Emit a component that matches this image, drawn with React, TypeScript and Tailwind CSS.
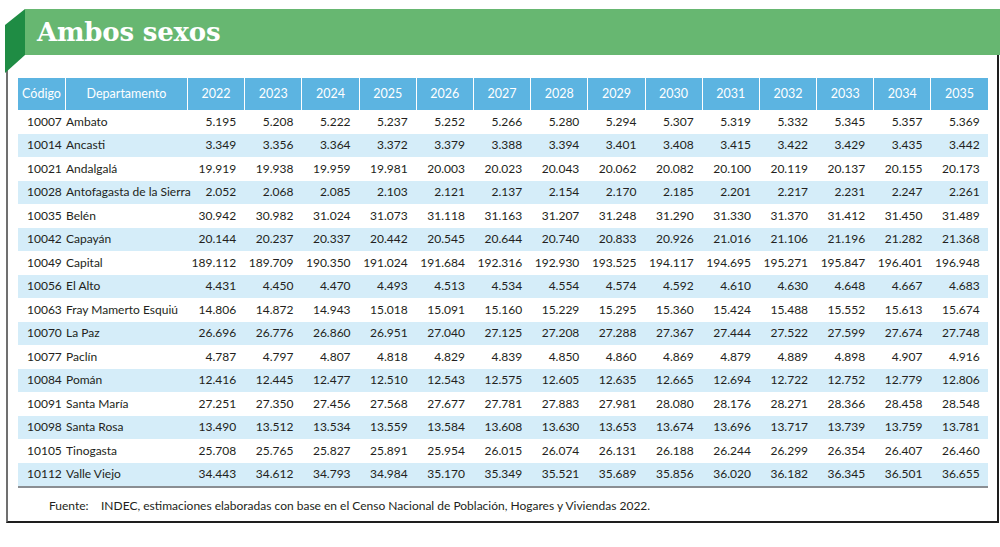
import React from "react";

const years = [2022, 2023, 2024, 2025, 2026, 2027, 2028, 2029, 2030, 2031, 2032, 2033, 2034, 2035];

const rows: [string, string, string][] = [
  ["10007", "Ambato", "5.195 5.208 5.222 5.237 5.252 5.266 5.280 5.294 5.307 5.319 5.332 5.345 5.357 5.369"],
  ["10014", "Ancasti", "3.349 3.356 3.364 3.372 3.379 3.388 3.394 3.401 3.408 3.415 3.422 3.429 3.435 3.442"],
  ["10021", "Andalgalá", "19.919 19.938 19.959 19.981 20.003 20.023 20.043 20.062 20.082 20.100 20.119 20.137 20.155 20.173"],
  ["10028", "Antofagasta de la Sierra", "2.052 2.068 2.085 2.103 2.121 2.137 2.154 2.170 2.185 2.201 2.217 2.231 2.247 2.261"],
  ["10035", "Belén", "30.942 30.982 31.024 31.073 31.118 31.163 31.207 31.248 31.290 31.330 31.370 31.412 31.450 31.489"],
  ["10042", "Capayán", "20.144 20.237 20.337 20.442 20.545 20.644 20.740 20.833 20.926 21.016 21.106 21.196 21.282 21.368"],
  ["10049", "Capital", "189.112 189.709 190.350 191.024 191.684 192.316 192.930 193.525 194.117 194.695 195.271 195.847 196.401 196.948"],
  ["10056", "El Alto", "4.431 4.450 4.470 4.493 4.513 4.534 4.554 4.574 4.592 4.610 4.630 4.648 4.667 4.683"],
  ["10063", "Fray Mamerto Esquiú", "14.806 14.872 14.943 15.018 15.091 15.160 15.229 15.295 15.360 15.424 15.488 15.552 15.613 15.674"],
  ["10070", "La Paz", "26.696 26.776 26.860 26.951 27.040 27.125 27.208 27.288 27.367 27.444 27.522 27.599 27.674 27.748"],
  ["10077", "Paclín", "4.787 4.797 4.807 4.818 4.829 4.839 4.850 4.860 4.869 4.879 4.889 4.898 4.907 4.916"],
  ["10084", "Pomán", "12.416 12.445 12.477 12.510 12.543 12.575 12.605 12.635 12.665 12.694 12.722 12.752 12.779 12.806"],
  ["10091", "Santa María", "27.251 27.350 27.456 27.568 27.677 27.781 27.883 27.981 28.080 28.176 28.271 28.366 28.458 28.548"],
  ["10098", "Santa Rosa", "13.490 13.512 13.534 13.559 13.584 13.608 13.630 13.653 13.674 13.696 13.717 13.739 13.759 13.781"],
  ["10105", "Tinogasta", "25.708 25.765 25.827 25.891 25.954 26.015 26.074 26.131 26.188 26.244 26.299 26.354 26.407 26.460"],
  ["10112", "Valle Viejo", "34.443 34.612 34.793 34.984 35.170 35.349 35.521 35.689 35.856 36.020 36.182 36.345 36.501 36.655"],
];

const grid = "grid grid-cols-[47px_122px_repeat(14,57.2px)]";

export default function App() {
  return (
    <div
      className="relative w-[1000px] h-[547px] bg-white overflow-hidden text-[#231f20]"
      style={{ fontFamily: "Lato, 'Open Sans', sans-serif" }}
    >
      <div className="ml-[25px] mt-[9px] h-[46px] bg-[#67b771] flex items-center pl-[12px]">
        <span
          className="text-white font-bold text-[26px] leading-none tracking-[-0.2px]"
          style={{ fontFamily: "'DejaVu Serif', serif" }}
        >
          Ambos sexos
        </span>
      </div>

      <div className="ml-[6px] w-[993px] h-[468px] border-l-2 border-l-[#707070] border-r-2 border-r-[#1e1e1e] border-b-2 border-b-[#1e1e1e] pt-[23px] pl-[10px]">
        <div className="w-[970px] text-[12px]">
          <div className={`${grid} h-[32px] bg-[#5cb4e1] text-white text-[12.5px]`}>
            <div className="flex items-center justify-center">Código</div>
            <div className="flex items-center justify-center border-l border-white">Departamento</div>
            {years.map((y) => (
              <div key={y} className="flex items-center justify-center border-l border-white">
                {y}
              </div>
            ))}
          </div>
          {rows.map(([code, name, vals], i) => (
            <div
              key={code}
              className={`${grid} h-[23.5px] items-center ${i % 2 === 1 ? "bg-[#d5edf9]" : "bg-white"}`}
            >
              <div className="pl-[9px]">{code}</div>
              <div className="pl-[1px] whitespace-nowrap">{name}</div>
              {vals.split(" ").map((v, j) => (
                <div key={j} className="text-right pr-[8px]">
                  {v}
                </div>
              ))}
            </div>
          ))}
          <div className="h-[2px] bg-[#8a8e93]" />
        </div>
        <div className="mt-[11px] flex text-[12px] leading-[14px]">
          <span className="ml-[31px] w-[52px]">Fuente:</span>
          <span>INDEC, estimaciones elaboradas con base en el Censo Nacional de Población, Hogares y Viviendas 2022.</span>
        </div>
      </div>

      <svg className="absolute left-[5px] top-[9px]" width="20" height="64" viewBox="0 0 20 64">
        <polygon points="0,16 20,0 20,46 0,64" fill="#1f8c44" />
      </svg>
    </div>
  );
}
